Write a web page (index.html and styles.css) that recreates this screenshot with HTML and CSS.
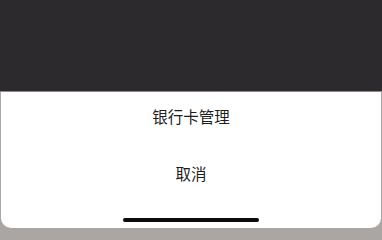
FILE: index.html
```html
<!DOCTYPE html>
<html lang="zh-CN">
<head>
<meta charset="utf-8">
<link rel="stylesheet" href="styles.css">
</head>
<body>
<div class="screen">
  <div class="backdrop"></div>
  <div class="sheet">
    <div class="item item-main">银行卡管理</div>
    <div class="item item-cancel">取消</div>
    <div class="home-bar"><span class="home-indicator"></span></div>
  </div>
</div>
</body>
</html>
```
FILE: styles.css
```css
html, body {
  margin: 0;
  padding: 0;
  width: 382px;
  height: 229px;
  overflow: hidden;
  background: #aaa6a3;
  font-family: "Noto Sans CJK SC", "Noto Sans", sans-serif;
}
.screen {
  display: flex;
  flex-direction: column;
  height: 229px;
}
.backdrop {
  height: 91px;
  background: #2c2a2d;
  border-bottom: 1px solid #8f8c8b;
  flex: none;
}
.sheet {
  flex: none;
  height: 136px;
  margin: 0 1px;
  background: #ffffff;
  border-radius: 0 0 10px 10px;
  display: flex;
  flex-direction: column;
}
.item {
  display: flex;
  align-items: center;
  justify-content: center;
  font-size: 15.5px;
  color: #1d1d1f;
  flex: none;
}
.item-main {
  height: 48px;
}
.item-cancel {
  height: 66px;
}
.home-bar {
  display: flex;
  justify-content: center;
  padding-top: 12px;
}
.home-indicator {
  width: 136px;
  height: 4px;
  border-radius: 2px;
  background: #0b0b0b;
}
```
